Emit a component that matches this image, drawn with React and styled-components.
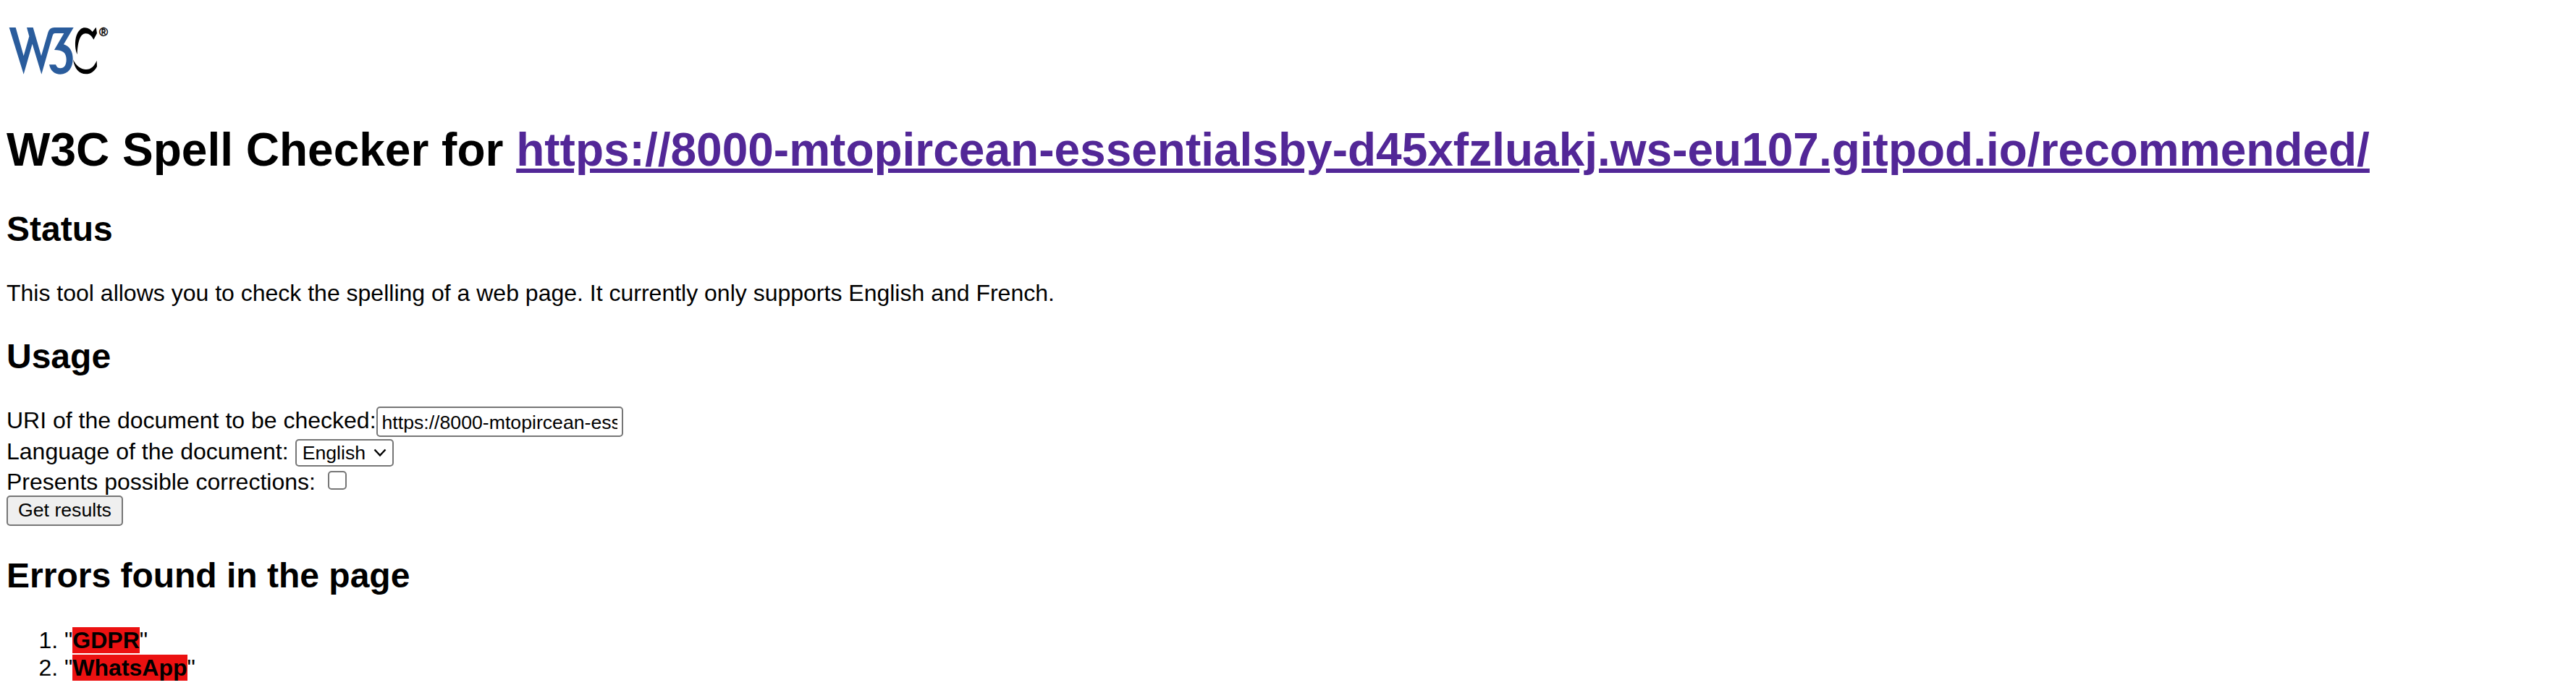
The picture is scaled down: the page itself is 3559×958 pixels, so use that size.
import React from "react";
import styled, { createGlobalStyle } from "styled-components";

const GlobalStyle = createGlobalStyle`
  body {
    margin: 0;
    background: #fff;
    color: #000;
    font-family: "Liberation Sans", Arial, sans-serif;
    font-size: 32px;
    line-height: 38px;
  }
`;

const Page = styled.main`
  display: flow-root;
  padding: 20px 9px 0;
  white-space: nowrap;
`;

const Logo = styled.svg`
  display: block;
  width: 150px;
  height: 100px;
`;

const Title = styled.h1`
  margin: 50px 0 45px;
  font-size: 64px;
  line-height: 74px;
`;

const VisitedLink = styled.a`
  color: #522797;
  text-decoration: underline;
`;

const Heading = styled.h2`
  margin: 41px 0;
  font-size: 48px;
  line-height: 56px;
`;

const Text = styled.p`
  margin: 0;
`;

const Form = styled.form`
  display: flex;
  flex-direction: column;
  align-items: flex-start;
`;

const Row = styled.label`
  display: flex;
  align-items: flex-start;
  height: ${(p) => p.$height}px;
  gap: ${(p) => p.$gap || 0}px;
`;

const control = `
  appearance: none;
  box-sizing: border-box;
  margin: 0;
  border: 2px solid #767676;
  border-radius: 5px;
  background: #fff;
  color: #000;
  font: 26.667px "Liberation Sans", Arial, sans-serif;
`;

const UriInput = styled.input`
  ${control}
  width: 341px;
  height: 42px;
  padding: 3px 6px 1px;
`;

const SelectBox = styled.span`
  display: grid;
  align-items: center;
  width: 136px;
  height: 38px;
  margin-top: 2px;

  > * {
    grid-area: 1 / 1;
  }
`;

const Select = styled.select`
  ${control}
  width: 136px;
  height: 38px;
  padding: 0 0 1px 8px;
`;

const Chevron = styled.svg`
  justify-self: end;
  width: 18px;
  height: 12px;
  margin-right: 10px;
  pointer-events: none;
`;

const Checkbox = styled.input`
  ${control}
  width: 26px;
  height: 26px;
  margin-top: 4px;
`;

const Button = styled.button`
  ${control}
  width: 161px;
  height: 42px;
  padding: 0 0 1px;
  background: #efefef;
`;

const ErrorList = styled.ol`
  margin: 42px 0 0;
  padding-left: 80px;
`;

const Misspelled = styled.strong`
  background: #ec1111;
`;

const uri =
  "https://8000-mtopircean-essentialsby-d45xfzluakj.ws-eu107.gitpod.io/recommended/";

export default function App() {
  return (
    <>
      <GlobalStyle />
      <Page>
        <Logo viewBox="27 0 450 300" role="img" aria-label="W3C">
          <path
            fill="#2a5c9c"
            d="M38 54H65L98 172L121 91L111 54H137L171 172L199 75Q205 54 225 54H305L264 124C289 132 302 154 302 184C302 222 282 248 250 248C226 248 210 235 204 208H231C235 219 241 223 250 223C266 223 275 210 275 187C275 158 259 147 225 147L265 78H228Q221 78 218 88L172 248L134 122L98 248Z"
          />
          <path d="M398 53L402 78L388 104C379 88 369 79 355 79C333 79 322 112 320 166C308 138 310 98 321 78C331 61 341 54 353 55C366 56 376 62 383 72Z" />
          <path d="M303 187C315 212 333 228 357 228C378 228 391 213 401 191L402 216C391 237 376 247 356 247C329 247 309 227 303 187Z" />
          <text
            x="411"
            y="89"
            fontSize="49"
            fontFamily="Liberation Sans, Arial, sans-serif"
            stroke="#000"
            strokeWidth="1.5"
          >
            ®
          </text>
        </Logo>
        <Title>
          W3C Spell Checker for <VisitedLink href="#">{uri}</VisitedLink>
        </Title>
        <Heading>Status</Heading>
        <Text>
          This tool allows you to check the spelling of a web page. It currently
          only supports English and French.
        </Text>
        <Heading>Usage</Heading>
        <Form>
          <Row $height={43}>
            URI of the document to be checked:
            <UriInput defaultValue={uri} />
          </Row>
          <Row $height={42} $gap={9}>
            Language of the document:
            <SelectBox>
              <Select defaultValue="en">
                <option value="en">English</option>
                <option value="fr">French</option>
              </Select>
              <Chevron viewBox="0 0 18 12">
                <path
                  d="M1.5 1.5L9 9.5L16.5 1.5"
                  fill="none"
                  stroke="#000"
                  strokeWidth="2.4"
                />
              </Chevron>
            </SelectBox>
          </Row>
          <Row $height={38} $gap={17}>
            Presents possible corrections:
            <Checkbox type="checkbox" />
          </Row>
          <Button type="button">Get results</Button>
        </Form>
        <Heading>Errors found in the page</Heading>
        <ErrorList>
          <li>
            "<Misspelled>GDPR</Misspelled>"
          </li>
          <li>
            "<Misspelled>WhatsApp</Misspelled>"
          </li>
        </ErrorList>
      </Page>
    </>
  );
}
